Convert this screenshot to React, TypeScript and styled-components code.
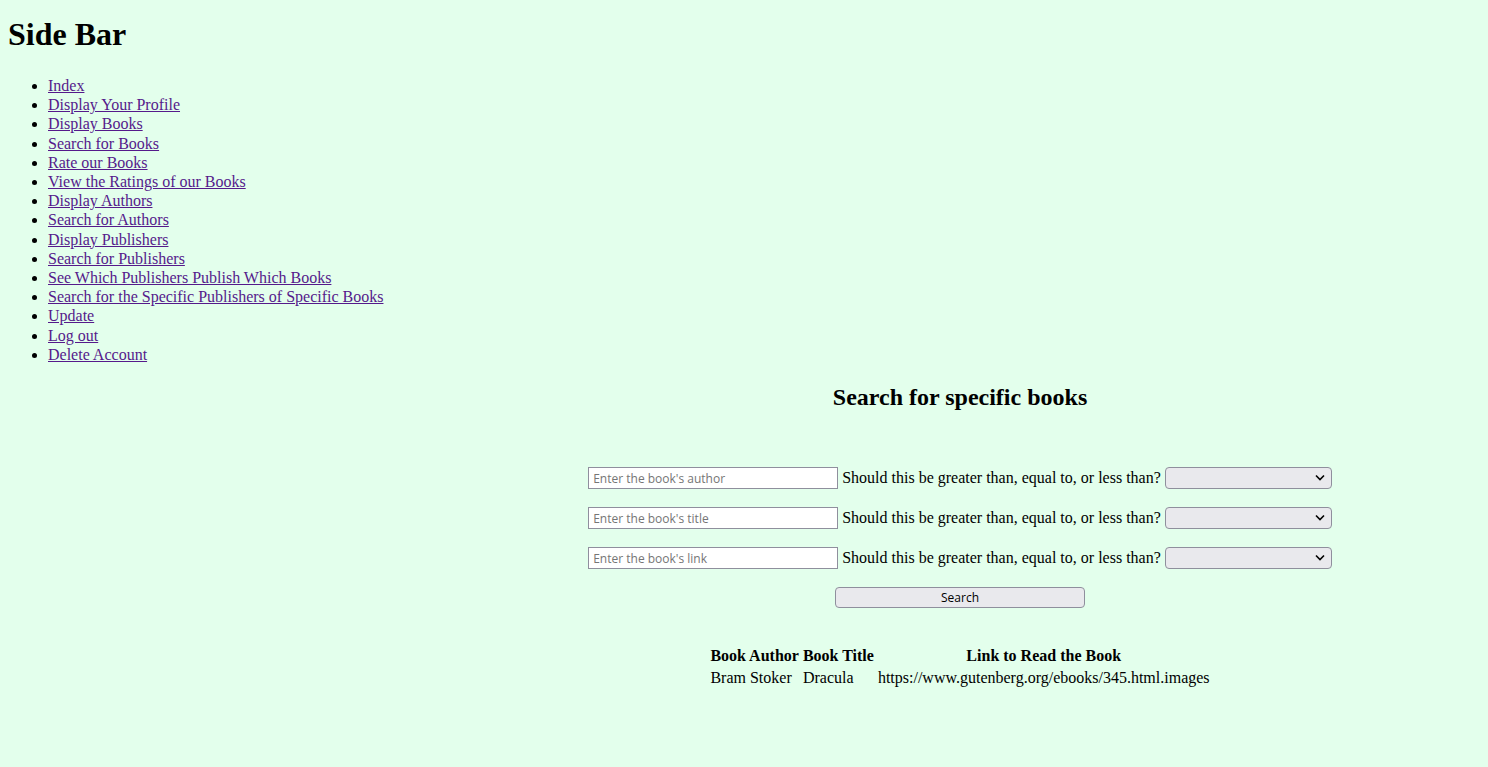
import styled, { createGlobalStyle } from 'styled-components'

const GlobalStyle = createGlobalStyle`
  body {
    margin: 8px;
    background: #e3ffec;
    font-family: "Liberation Serif", "Times New Roman", serif;
    font-size: 16px;
    color: #000;
  }
`

const Page = styled.div`
  display: flex;
  flex-direction: column;
`

const SideBar = styled.nav`
  display: flex;
  flex-direction: column;
`

const SideTitle = styled.h1`
  font-size: 32px;
  font-weight: bold;
  line-height: 37px;
  margin: 8px 0 23px;
`

const NavList = styled.ul`
  margin: 0;
  padding-left: 40px;
  list-style: disc;
`

const NavItem = styled.li`
  line-height: 19.2px;
`

const NavLink = styled.a`
  color: #551a8b;
  text-decoration: underline;
`

const Main = styled.main`
  margin-left: 432px;
  display: flex;
  flex-direction: column;
  align-items: center;
`

const SectionTitle = styled.h2`
  font-size: 24px;
  font-weight: bold;
  line-height: 28px;
  margin: 19px 0 0;
`

const SearchForm = styled.form`
  display: flex;
  flex-direction: column;
  align-items: center;
  gap: 18px;
  margin-top: 56px;
`

const FieldRow = styled.div`
  display: flex;
  align-items: center;
  gap: 4px;
`

const TextInput = styled.input`
  box-sizing: border-box;
  width: 250px;
  height: 22px;
  padding: 1px 4px;
  border: 1px solid #8f8f9d;
  border-radius: 0;
  background: #fff;
  font-family: "Open Sans", "Liberation Sans", Arial, sans-serif;
  font-size: 12px;

  &::placeholder {
    color: #757575;
  }
`

const Label = styled.span`
  font-size: 16px;
  white-space: nowrap;
`

const SelectWrap = styled.div`
  position: relative;
  width: 167px;
  height: 22px;
`

const Select = styled.select`
  box-sizing: border-box;
  width: 100%;
  height: 100%;
  appearance: none;
  border: 1px solid #8f8f9d;
  border-radius: 4px;
  background: #e9e9ed;
  font-size: 13px;
`

const Chevron = styled.svg`
  position: absolute;
  right: 7px;
  top: 7px;
  pointer-events: none;
`

const SearchButton = styled.button`
  box-sizing: border-box;
  width: 250px;
  height: 21px;
  border: 1px solid #8f8f9d;
  border-radius: 4px;
  background: #e9e9ed;
  font-family: "Open Sans", "Liberation Sans", Arial, sans-serif;
  font-size: 12px;
  color: #000;
  padding: 0;
`

const ResultTable = styled.table`
  margin-top: 36px;
  border-spacing: 2px;
  font-size: 16px;
`

const HeadCell = styled.th`
  padding: 1px;
  font-weight: bold;
  text-align: center;
  line-height: 18px;
`

const Cell = styled.td`
  padding: 1px;
  text-align: left;
  line-height: 18px;
`

const links = [
  'Index',
  'Display Your Profile',
  'Display Books',
  'Search for Books',
  'Rate our Books',
  'View the Ratings of our Books',
  'Display Authors',
  'Search for Authors',
  'Display Publishers',
  'Search for Publishers',
  'See Which Publishers Publish Which Books',
  'Search for the Specific Publishers of Specific Books',
  'Update',
  'Log out',
  'Delete Account',
]

const fields = ["Enter the book's author", "Enter the book's title", "Enter the book's link"]

const results = [
  { author: 'Bram Stoker', title: 'Dracula', link: 'https://www.gutenberg.org/ebooks/345.html.images' },
]

const App = () => {
  return (
    <>
      <GlobalStyle />
      <Page>
        <SideBar>
          <SideTitle>Side Bar</SideTitle>
          <NavList>
            {links.map((l) => (
              <NavItem key={l}>
                <NavLink href="#">{l}</NavLink>
              </NavItem>
            ))}
          </NavList>
        </SideBar>
        <Main>
          <SectionTitle>Search for specific books</SectionTitle>
          <SearchForm onSubmit={(e) => e.preventDefault()}>
            {fields.map((f) => (
              <FieldRow key={f}>
                <TextInput type="text" placeholder={f} />
                <Label>Should this be greater than, equal to, or less than?</Label>
                <SelectWrap>
                  <Select defaultValue="">
                    <option value=""></option>
                    <option value="gt">Greater than</option>
                    <option value="eq">Equal to</option>
                    <option value="lt">Less than</option>
                  </Select>
                  <Chevron width="10" height="7" viewBox="0 0 10 7">
                    <path d="M1 1.5 L5 5.5 L9 1.5" fill="none" stroke="#000" strokeWidth="1.6" />
                  </Chevron>
                </SelectWrap>
              </FieldRow>
            ))}
            <SearchButton type="submit">Search</SearchButton>
          </SearchForm>
          <ResultTable>
            <thead>
              <tr>
                <HeadCell>Book Author</HeadCell>
                <HeadCell>Book Title</HeadCell>
                <HeadCell>Link to Read the Book</HeadCell>
              </tr>
            </thead>
            <tbody>
              {results.map((r) => (
                <tr key={r.link}>
                  <Cell>{r.author}</Cell>
                  <Cell>{r.title}</Cell>
                  <Cell>{r.link}</Cell>
                </tr>
              ))}
            </tbody>
          </ResultTable>
        </Main>
      </Page>
    </>
  )
}

export default App
